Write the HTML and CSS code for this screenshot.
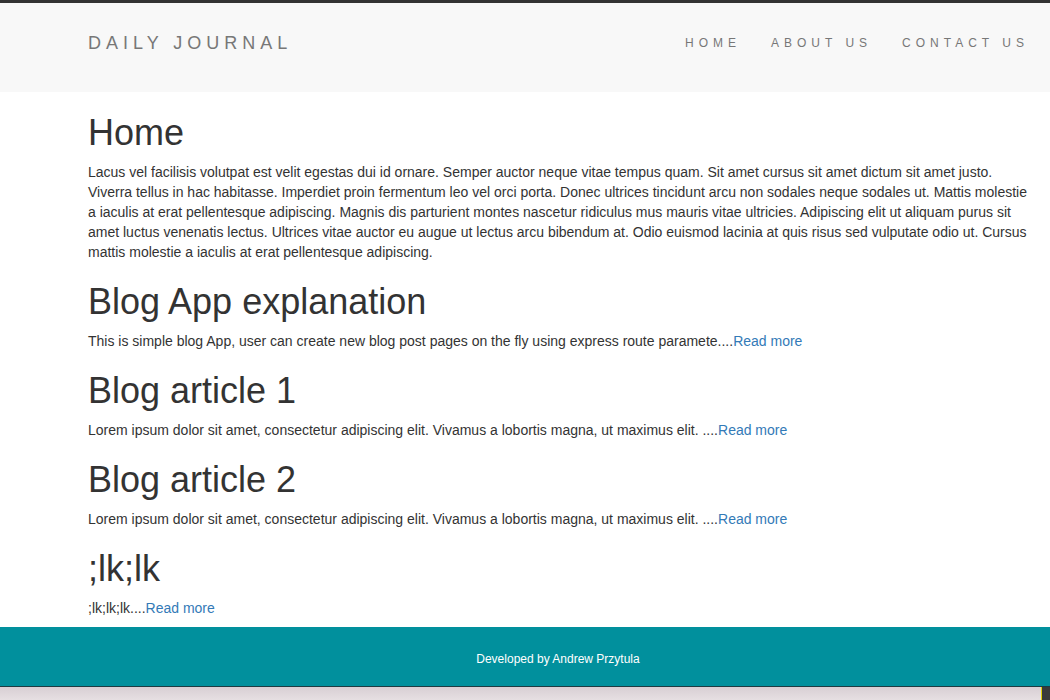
FILE: index.html
```html
<!DOCTYPE html>
<html lang="en">
<head>
<meta charset="utf-8">
<title>Daily Journal</title>
<link rel="stylesheet" href="styles.css">
</head>
<body>
<div class="topbar"></div>
<header class="navbar">
  <a class="brand" href="#">DAILY JOURNAL</a>
  <nav class="nav">
    <a href="#">HOME</a>
    <a href="#">ABOUT US</a>
    <a href="#">CONTACT US</a>
  </nav>
</header>
<main class="content">
  <h1>Home</h1>
  <p>Lacus vel facilisis volutpat est velit egestas dui id ornare. Semper auctor neque vitae tempus quam. Sit amet cursus sit amet dictum sit amet justo. Viverra tellus in hac habitasse. Imperdiet proin fermentum leo vel orci porta. Donec ultrices tincidunt arcu non sodales neque sodales ut. Mattis molestie a iaculis at erat pellentesque adipiscing. Magnis dis parturient montes nascetur ridiculus mus mauris vitae ultricies. Adipiscing elit ut aliquam purus sit amet luctus venenatis lectus. Ultrices vitae auctor eu augue ut lectus arcu bibendum at. Odio euismod lacinia at quis risus sed vulputate odio ut. Cursus mattis molestie a iaculis at erat pellentesque adipiscing.</p>
  <h1>Blog App explanation</h1>
  <p>This is simple blog App, user can create new blog post pages on the fly using express route paramete....<a href="#">Read more</a></p>
  <h1>Blog article 1</h1>
  <p>Lorem ipsum dolor sit amet, consectetur adipiscing elit. Vivamus a lobortis magna, ut maximus elit. ....<a href="#">Read more</a></p>
  <h1>Blog article 2</h1>
  <p>Lorem ipsum dolor sit amet, consectetur adipiscing elit. Vivamus a lobortis magna, ut maximus elit. ....<a href="#">Read more</a></p>
  <h1>;lk;lk</h1>
  <p>;lk;lk;lk....<a href="#">Read more</a></p>
</main>
<footer class="footer">
  <p class="footer-text">Developed by Andrew Przytula</p>
</footer>
<div class="below">
  <div class="below-light"></div>
  <div class="below-dark"></div>
</div>
</body>
</html>
```

FILE: styles.css
```css
html, body {
  margin: 0;
  padding: 0;
  overflow: hidden;
  height: 700px;
}
body {
  font-family: "Liberation Sans", Arial, Helvetica, sans-serif;
  font-size: 14px;
  line-height: 20px;
  color: #333333;
  background: #ffffff;
}
.topbar {
  height: 3px;
  background: #333333;
}
.navbar {
  height: 89px;
  box-sizing: border-box;
  background: #f8f8f8;
  display: flex;
  justify-content: space-between;
  align-items: flex-start;
  padding: 30px 21px 0 88px;
}
.brand {
  font-size: 18px;
  line-height: 20px;
  letter-spacing: 5px;
  color: #777777;
  text-decoration: none;
}
.nav {
  display: flex;
  gap: 30px;
}
.nav a {
  font-size: 12px;
  line-height: 20px;
  letter-spacing: 5px;
  color: #777777;
  text-decoration: none;
}
.content {
  padding: 1px 14px 0 88px;
  overflow: hidden;
}
.content h1 {
  font-size: 36px;
  font-weight: 500;
  line-height: 39px;
  margin: 20px 0 10px;
  color: #333333;
}
.content p {
  margin: 0 0 9px;
}
.content a {
  color: #337ab7;
  text-decoration: none;
}
.footer {
  height: 60px;
  box-sizing: border-box;
  background: #01909d;
  display: flex;
  align-items: center;
  justify-content: center;
  padding: 5px 22px 0 88px;
  border-bottom: 1px solid #1d3b42;
}
.footer-text {
  margin: 0;
  font-size: 12px;
  line-height: 20px;
  color: #ffffff;
}
.below {
  display: flex;
  height: 13px;
}
.below-light {
  flex: 1;
  background: linear-gradient(#d8cfd4, #e6dfe2);
  border-right: 1px solid #e0d000;
}
.below-dark {
  width: 8px;
  background: #3a3a3a;
}
```
